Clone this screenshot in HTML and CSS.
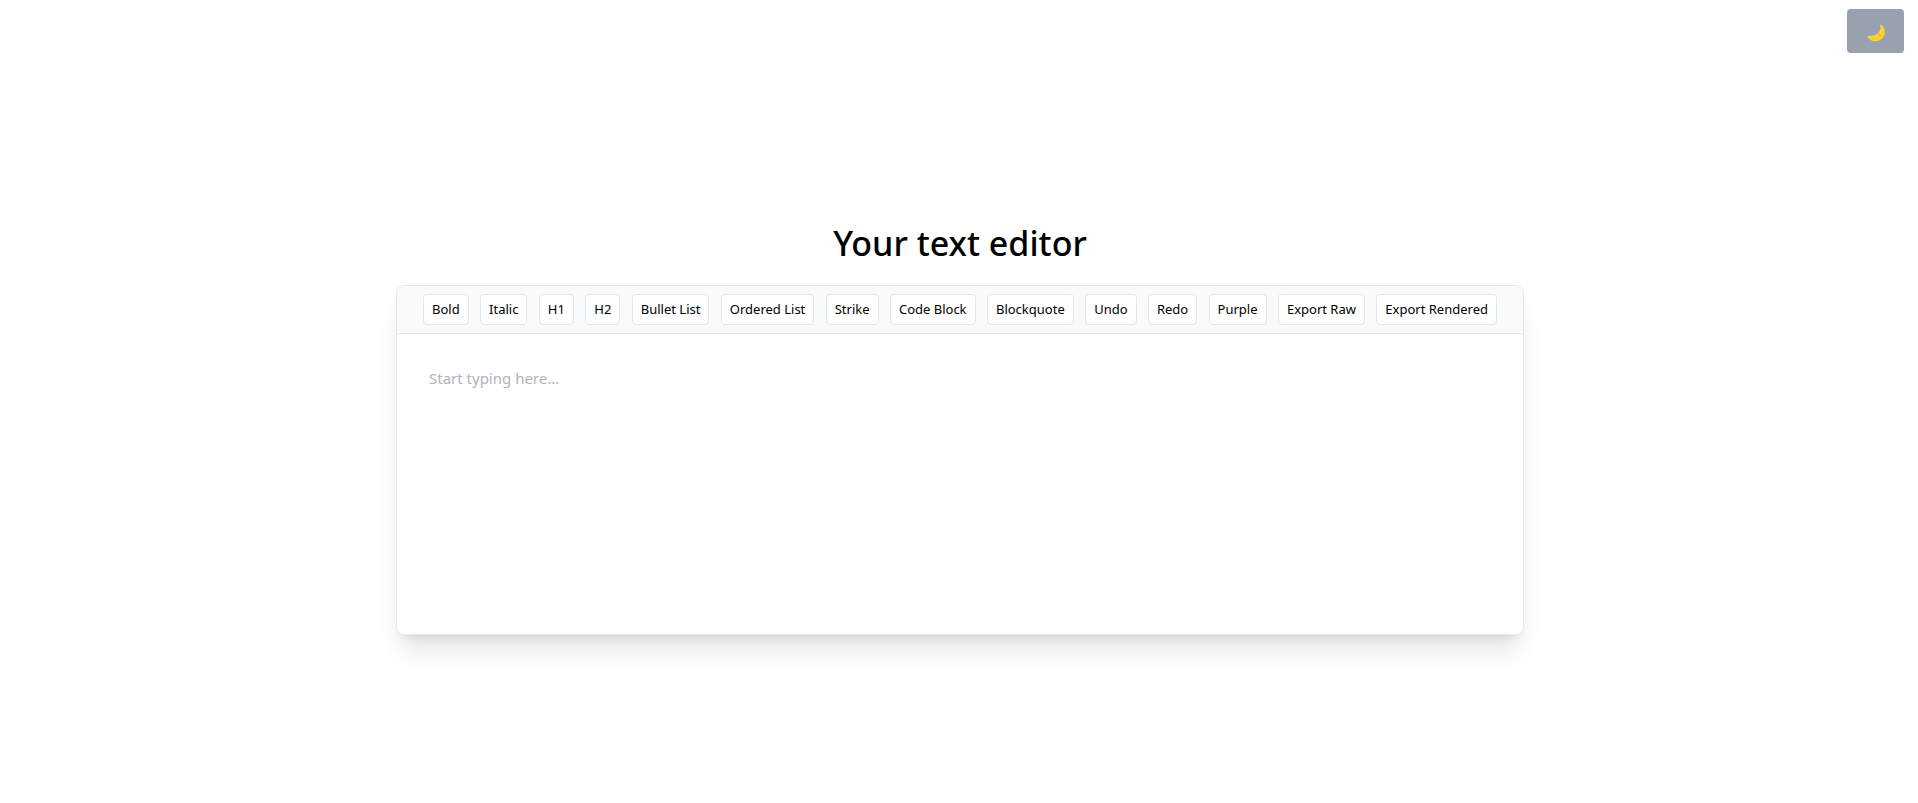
FILE: index.html
```
<!DOCTYPE html>
<html lang="en">
<head>
<meta charset="utf-8">
<meta name="viewport" content="width=device-width, initial-scale=1">
<title>Your text editor</title>
<link rel="stylesheet" href="styles.css">
</head>
<body>
<button class="theme-toggle" type="button" aria-label="Switch to dark theme">
  <svg class="moon" viewBox="0 0 18 18" aria-hidden="true">
    <path d="M14 .6C18.600 3.500 18.900 10.500 15.500 14C11.500 18.600 3.800 18.500 .7 12.700C.4 12 .8 11.600 1.500 11.700C9 12.800 14.700 8.500 13.300 1.200C13.200 .6 13.600 .3 14 .6Z" fill="#fdd32f"/>
    <circle cx="12.800" cy="11.700" r="1.600" fill="#f6b92c"/>
    <circle cx="6.400" cy="14.200" r="1" fill="#f6b92c"/>
    <circle cx="15.700" cy="7.500" r=".8" fill="#f6b92c"/>
    <circle cx="10.200" cy="15.300" r=".8" fill="#f6b92c"/>
  </svg>
</button>
<main class="page">
  <h1 class="title">Your text editor</h1>
  <section class="editor">
    <div class="toolbar" role="toolbar" aria-label="Formatting">
      <button class="tool" type="button">Bold</button>
      <button class="tool" type="button">Italic</button>
      <button class="tool" type="button">H1</button>
      <button class="tool" type="button">H2</button>
      <button class="tool" type="button">Bullet List</button>
      <button class="tool" type="button">Ordered List</button>
      <button class="tool" type="button">Strike</button>
      <button class="tool" type="button">Code Block</button>
      <button class="tool" type="button">Blockquote</button>
      <button class="tool" type="button">Undo</button>
      <button class="tool" type="button">Redo</button>
      <button class="tool" type="button">Purple</button>
      <button class="tool" type="button">Export Raw</button>
      <button class="tool" type="button">Export Rendered</button>
    </div>
    <textarea class="content" aria-label="Document text" placeholder="Start typing here..."></textarea>
  </section>
</main>
</body>
</html>
```
FILE: styles.css
```
* {
  box-sizing: border-box;
}

body {
  margin: 0;
  background: #fff;
  color: #000;
  font-family: "Segoe UI", "Noto Sans", sans-serif;
}

.theme-toggle {
  position: fixed;
  top: 9px;
  right: 14px;
  display: flex;
  padding: 15px 19px 11px 20px;
  border: 0;
  border-radius: 4px;
  background: #99a1af;
  cursor: pointer;
}

.moon {
  width: 18px;
  height: 18px;
}

.page {
  display: flex;
  flex-direction: column;
  align-items: center;
  justify-content: center;
  gap: 20px;
  min-height: 100vh;
  padding: 52px 16px 0 18px;
}

.title {
  margin: 0;
  font-size: 34px;
  line-height: 44px;
  font-weight: 500;
}

.editor {
  width: 100%;
  max-width: 1128px;
  overflow: hidden;
  border: 1px solid #e2e8f0;
  border-radius: 8px;
  background: #fff;
  box-shadow: 0 20px 25px -5px rgba(0, 0, 0, 0.1), 0 8px 10px -6px rgba(0, 0, 0, 0.1);
}

.toolbar {
  display: flex;
  flex-wrap: wrap;
  justify-content: space-between;
  gap: 8px;
  padding: 8px 26px;
  border-bottom: 1px solid #e2e8f0;
  background: #f8fafc;
}

.tool {
  padding: 4px 8px;
  border: 1px solid #e2e8f0;
  border-radius: 4px;
  background: #fff;
  color: #000;
  font-family: inherit;
  font-size: 13px;
  line-height: 21px;
  cursor: pointer;
}

.content {
  display: block;
  width: 100%;
  min-height: 300px;
  padding: 32px;
  border: 0;
  outline: 0;
  resize: none;
  background: #fff;
  color: #000;
  font-family: inherit;
  font-size: 15px;
  line-height: 24px;
}

.content::placeholder {
  color: #adb5bd;
}
```
